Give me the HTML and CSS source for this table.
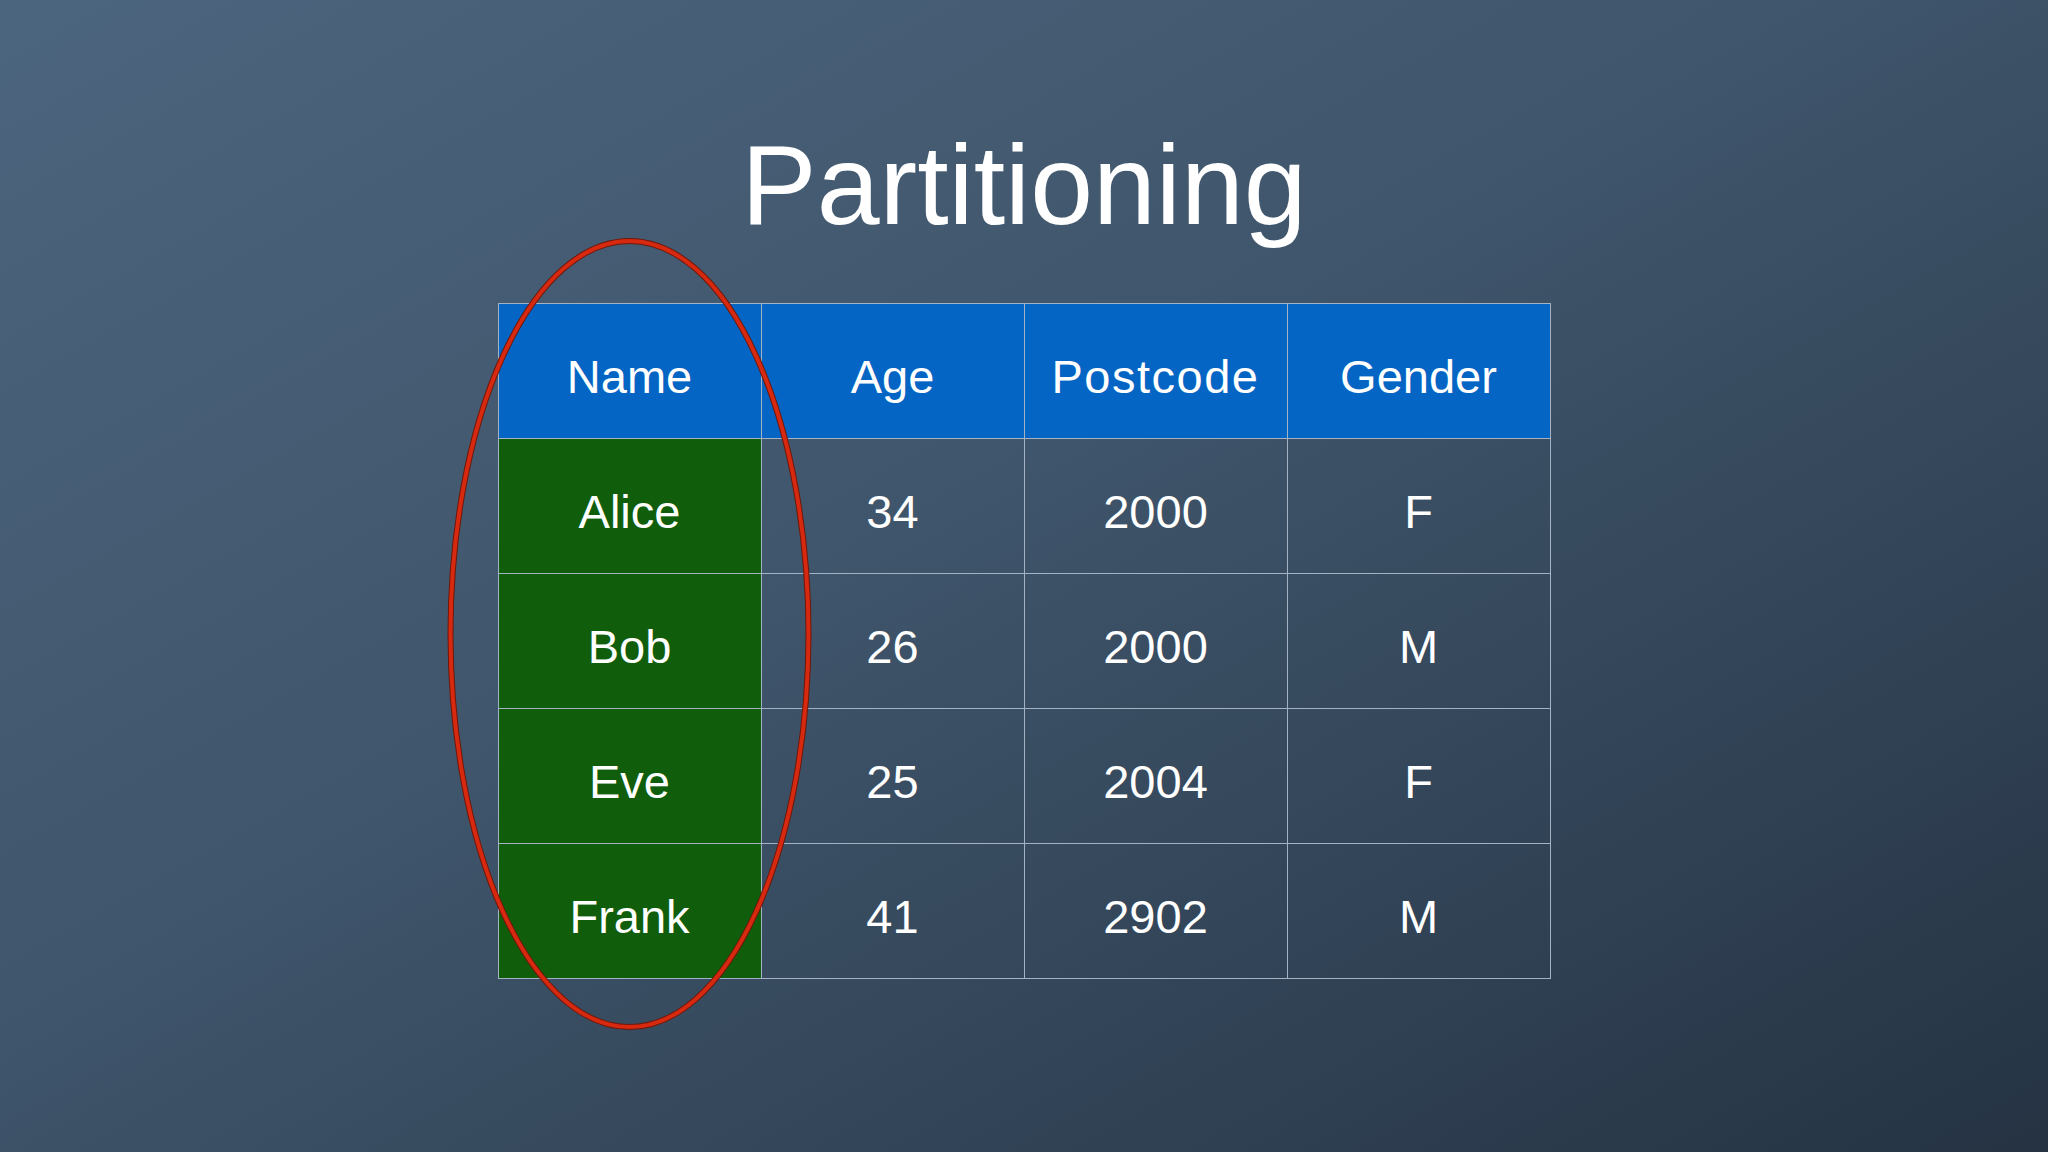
FILE: index.html
```html
<!DOCTYPE html>
<html>
<head>
<meta charset="utf-8">
<link rel="stylesheet" href="styles.css">
</head>
<body>
<div class="slide">
  <h1 class="title">Partitioning</h1>
  <div class="grid">
    <div class="cell head">Name</div>
    <div class="cell head">Age</div>
    <div class="cell head wide">Postcode</div>
    <div class="cell head">Gender</div>

    <div class="cell key">Alice</div>
    <div class="cell">34</div>
    <div class="cell">2000</div>
    <div class="cell">F</div>

    <div class="cell key">Bob</div>
    <div class="cell">26</div>
    <div class="cell">2000</div>
    <div class="cell">M</div>

    <div class="cell key">Eve</div>
    <div class="cell">25</div>
    <div class="cell">2004</div>
    <div class="cell">F</div>

    <div class="cell key">Frank</div>
    <div class="cell">41</div>
    <div class="cell">2902</div>
    <div class="cell">M</div>
  </div>
  <svg class="mark" width="2048" height="1152" viewBox="0 0 2048 1152">
    <ellipse cx="629.5" cy="634" rx="179" ry="393" fill="none" stroke="#6e180b" stroke-width="6"/>
    <ellipse cx="629.5" cy="634" rx="179" ry="393" fill="none" stroke="#d6290f" stroke-width="4"/>
  </svg>
</div>
</body>
</html>
```
FILE: styles.css
```css
html, body {
  margin: 0;
  padding: 0;
}
body {
  width: 2048px;
  height: 1152px;
  overflow: hidden;
  font-family: "Liberation Sans", Arial, sans-serif;
  color: #ffffff;
}
.slide {
  position: relative;
  width: 2048px;
  height: 1152px;
  background: linear-gradient(to bottom right, #4c657e 0%, #3f556b 45%, #253343 100%);
  display: flex;
  flex-direction: column;
  align-items: center;
}
.title {
  margin: 129px 0 0 0;
  font-size: 113px;
  line-height: 113px;
  font-weight: normal;
  letter-spacing: 0;
}
.grid {
  margin-top: 61px;
  display: grid;
  grid-template-columns: repeat(4, 263px);
  grid-template-rows: repeat(5, 135px);
  border-top: 1px solid #a3b3c3;
  border-left: 1px solid #a3b3c3;
}
.cell {
  border-right: 1px solid #a3b3c3;
  border-bottom: 1px solid #a3b3c3;
  display: flex;
  align-items: center;
  justify-content: center;
  padding-top: 10px;
  font-size: 47px;
  box-sizing: border-box;
}
.wide {
  letter-spacing: 1.5px;
}
.head {
  background: #0565c4;
}
.key {
  background: #105d0c;
}
.mark {
  position: absolute;
  left: 0;
  top: 0;
  pointer-events: none;
}
```
